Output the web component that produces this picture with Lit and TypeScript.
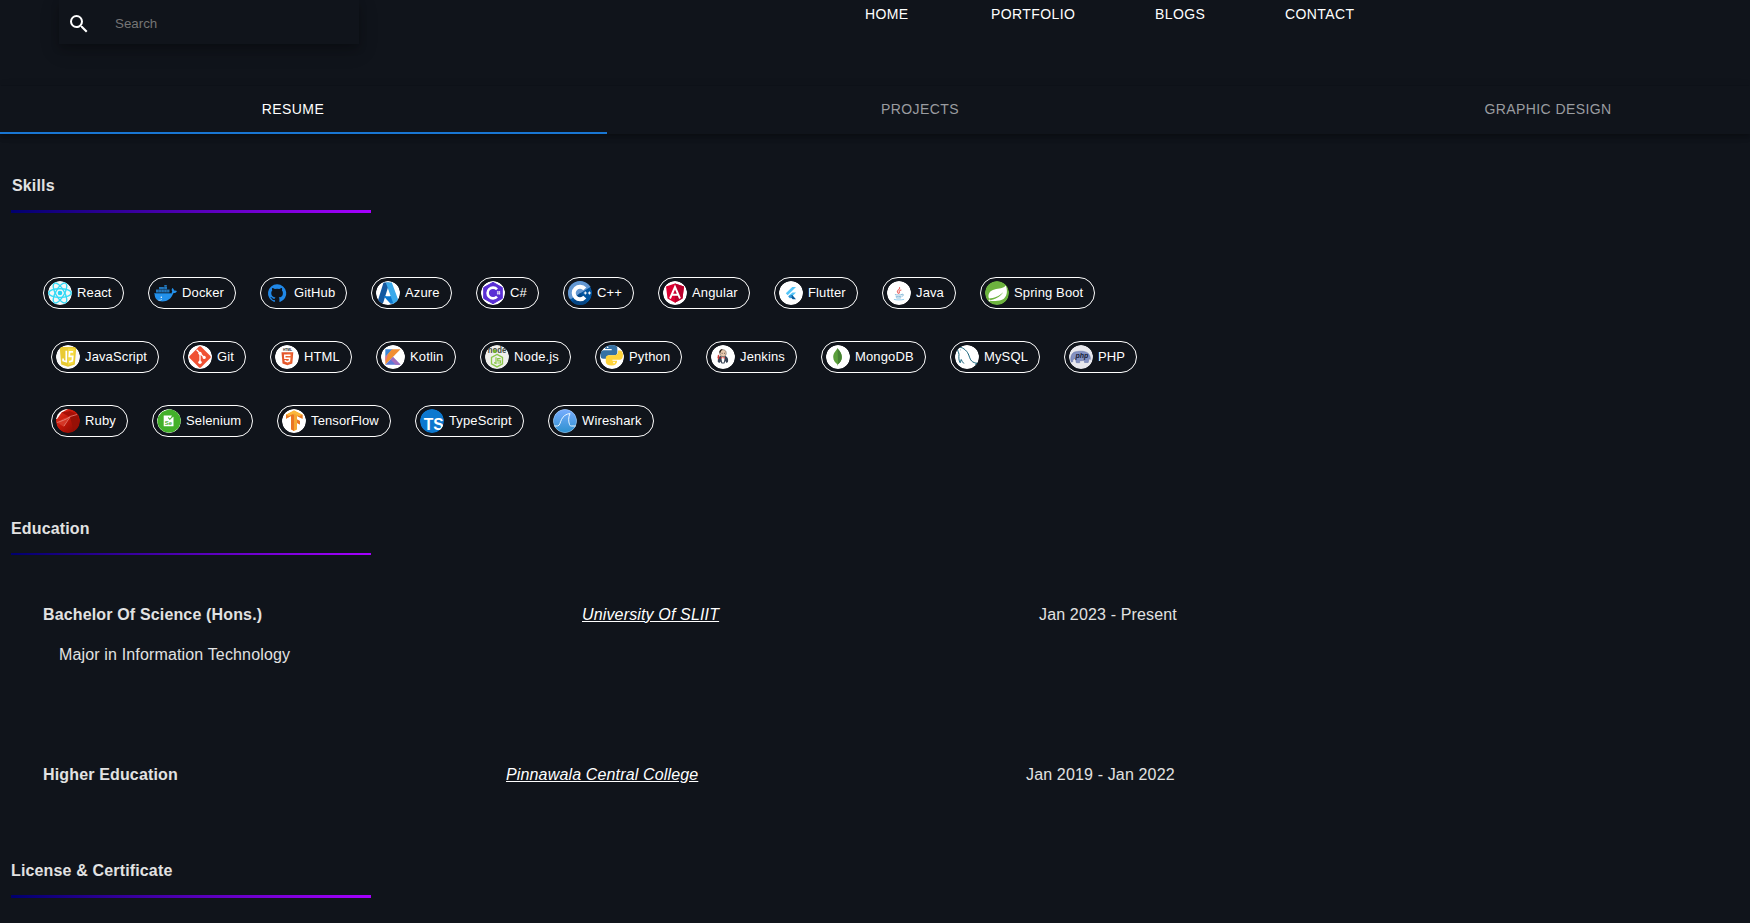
import { LitElement, html, svg, css, TemplateResult, SVGTemplateResult } from "lit";
import { customElement, property, state } from "lit/decorators.js";
import { classMap } from "lit/directives/class-map.js";
import { styleMap } from "lit/directives/style-map.js";

const white = svg`<circle cx="12" cy="12" r="12" fill="#fff"/>`;

const icons: Record<string, SVGTemplateResult> = {
  React: svg`<circle cx="12" cy="12" r="12" fill="#f4f6f6"/>
    <g fill="none" stroke="#35daf6" stroke-width="1.350">
      <ellipse cx="12" cy="12" rx="11.300" ry="4.300"/>
      <ellipse cx="12" cy="12" rx="11.300" ry="4.300" transform="rotate(60 12 12)"/>
      <ellipse cx="12" cy="12" rx="11.300" ry="4.300" transform="rotate(120 12 12)"/>
    </g><circle cx="12" cy="12" r="2.300" fill="#22d3f5"/>`,
  Docker: svg`
    <path fill="#2391ec" d="M1.500 12h16.200c1 0 1.500-.6 1.500-1.500-.8-1.300-.5-2.600.2-3.500 1 .7 1.600 1.500 1.600 2.600 1.200-.2 2.200 0 3 .5-.6 1.500-1.900 2.200-3.700 2.200C18.500 17.500 14.500 20.500 9.300 20.500 4.200 20.500 1.500 17.600 1.500 12z"/>
    <path fill="#2277bd" d="M3 8.500h13.500v3H3zM6 6h8v2.200H6zM11.300 4h2.500v1.800h-2.500z"/>
    <path stroke="#14385a" stroke-width=".4" d="M5.700 8.500v3M8.400 8.500v3M11.100 6v5.500M13.800 8.500v3M3 8.400h13.500"/>
    <path stroke="#1569ad" stroke-width=".9" d="M1.500 12.500h17.500"/>
    <path stroke="#d8efff" stroke-width=".7" fill="none" d="M5.500 19.200c1.500.2 2.600-.2 3.500-1"/><circle cx="8.300" cy="16.300" r=".7" fill="#fff"/>`,
  GitHub: svg`<g transform="translate(3 3) scale(.76)"><path fill="#2088e8" d="M12 .3a12 12 0 0 0-3.800 23.400c.6.100.8-.3.8-.6v-2c-3.300.7-4-1.600-4-1.600-.6-1.400-1.400-1.800-1.400-1.800-1-.7.100-.7.100-.7 1.200 0 1.900 1.200 1.900 1.200 1 1.800 2.800 1.300 3.500 1 0-.8.4-1.300.7-1.600-2.700-.3-5.500-1.300-5.500-6 0-1.200.5-2.300 1.300-3.100-.2-.4-.6-1.600 0-3.200 0 0 1-.3 3.400 1.200a11.500 11.500 0 0 1 6 0c2.300-1.500 3.300-1.200 3.300-1.200.6 1.600.2 2.800 0 3.200.9.8 1.300 1.900 1.300 3.200 0 4.600-2.800 5.600-5.500 5.900.5.400.9 1 .9 2.200v3.300c0 .3.1.7.8.6A12 12 0 0 0 12 .3z"/></g>`,
  Azure: svg`${white}
    <path fill="#1458a0" d="M7.500 1.500h6L7.300 21.500c-.2.600-.7 1-1.400 1H1z"/>
    <path fill="#0a77d0" d="M7.500 15h9l2 7.800h-4z"/>
    <path fill="#3aa9ea" d="M9.800 1.500h6l7.400 20c.2.600-.2 1.200-.8 1.200h-6.200c.6-.2.900-.7.700-1.300z"/>
    <path fill="#fff" d="M12.100 9.300l2.200 6h-4.200z"/>`,
  "C#": svg`${white}
    <path fill="#5a2fd4" stroke="#5a2fd4" stroke-linejoin="round" d="M12 1.300l9.300 5.300v10.800L12 22.700l-9.300-5.300V6.600z"/>
    <path fill="none" stroke="#fff" stroke-width="2.600" d="M16 8.400a5.400 5.400 0 1 0 0 7.200"/>
    <path stroke="#fff" stroke-width=".7" d="M16.800 10v3.600M18.400 10v3.600M15.900 11h3.400M15.900 12.700h3.400"/>`,
  "C++": svg`<circle cx="12" cy="12" r="12" fill="#00539e"/>
    <path fill="#6498d2" d="M0 0h24v5L3 18 0 17z"/><path fill="#064684" d="M12 12l9 12H2z"/>
    <path fill="none" stroke="#fff" stroke-width="4" d="M16.800 7.900a6.300 6.300 0 1 0 0 8.200"/>
    <path stroke="#fff" stroke-width="1" d="M15.800 12h3M17.300 10.500v3M19.900 12h3M21.400 10.500v3"/>`,
  Angular: svg`${white}
    <path fill="#dd0031" d="M12 2.600l9 3-1.500 12L12 21.800l-7.500-4.200L3 5.600z"/>
    <path fill="#b8002c" d="M12 2.600l9 3-1.500 12L12 21.800z"/>
    <path fill="none" stroke="#fff" stroke-width="1.900" d="M7 17.500L12 6l5 11.500M9 13.700h6"/>`,
  Flutter: svg`${white}
    <path fill="#54c5f8" d="M13.300 6h3.700L8.700 14.200l-1.900-1.900z"/>
    <path fill="#54c5f8" d="M13.500 11.500H17l-4 4-2-2z"/>
    <path fill="#075b9d" d="M11.100 15.500l1.900-1.800 4 4.600h-3.300z"/>
    <path fill="#2a98dc" d="M11.100 13.600l2 2-2 2-2-2z"/>`,
  Java: svg`${white}
    <g fill="none" stroke-linecap="round"><path stroke="#ee6b69" stroke-width="1.100" d="M12.600 6.500c1 2-3 2.700-2.300 4.400.3.700 1 1 1.300 1.600M14 9c-1.800.7-2.300 1.500-1.500 2.800"/>
    <path stroke="#6ba9d0" stroke-width=".8" d="M8.300 13.600c1.500.6 5 .6 6.500 0M9 15.300c1.500.5 4 .5 5.200 0M9.300 16.800c1.400.4 3.300.4 4.500 0M15.300 13.200c1.800-.3 1.500 1.500 0 2"/>
    <path stroke="#8ac8ea" stroke-width=".9" d="M7.300 18.500c2 .6 7.400.6 9.400 0"/></g>`,
  "Spring Boot": svg`<circle cx="12" cy="12" r="12" fill="#6db33f"/>
    <path fill="#fff" d="M20.800 4.500c2.700 7 .5 13.800-6 15.100-4.200.9-7.700.3-10.800-.1 5.500-.8 11.500-3.400 14.300-8.500-4 4.500-9.500 6-14.300 6.600-1.700-4.500 1-8.300 5.500-9.200 4.500-1 9-.8 11.300-3.900z"/>
    <circle cx="4.500" cy="19.500" r=".9" fill="#fff"/>`,
  JavaScript: svg`<circle cx="12" cy="12" r="12" fill="#fafafa"/>
    <path fill="#e9ca32" d="M3.700 2h16.600l-1.500 17.500L12 21.700l-6.800-2.200z"/><path fill="#f5dc44" d="M12 3.500h6.800l-1.300 15L12 20z"/>
    <path fill="none" stroke="#fff" stroke-width="1.700" d="M10.300 5.800v10.900l-3.200-1v-2.300M17.100 6.800h-3.500l-.3 4.500h3.400l-.4 4.600-3.200 1"/>`,
  Git: svg`${white}
    <rect x="4" y="4" width="16" height="16" rx="1.300" fill="#f05133" transform="rotate(45 12 12)"/>
    <path fill="none" stroke="#fff" stroke-width="1.300" d="M8.600 4.700l3.400 3.500v9.500M12 8.200l4 4"/>
    <g fill="#fff"><circle cx="12" cy="8.300" r="1.600"/><circle cx="12" cy="17.300" r="1.700"/><circle cx="16.200" cy="12.400" r="1.600"/></g>`,
  HTML: svg`${white}
    <path fill="#e4552b" d="M6.500 7.300h11.800l-1 11.300-4.900 1.700-4.900-1.700z"/><path fill="#f06a33" d="M12.400 8.300h4.700l-.8 9.400-3.900 1.300z"/>
    <path fill="none" stroke="#fff" stroke-width="1.500" d="M15.500 10.300H9.700l.2 2.900h4.800l-.3 2.800-2 .7-2.100-.7-.1-.9"/>
    <text x="12.400" y="6.200" font-size="3.300" font-weight="700" text-anchor="middle" textLength="9" lengthAdjust="spacingAndGlyphs" fill="#222">HTML</text>`,
  Kotlin: svg`${white}
    <path fill="#3d88d8" d="M4.300 4.300h7.500l-7.500 8z"/><path fill="#f18e33" d="M11 4.300h8.500L4.300 19.800V12z"/>
    <path fill="#5c79d6" d="M4.300 19.800L12 12l7.600 7.800z"/><path fill="#a36cbf" d="M12 12l7.600 7.800h-5L9.500 14.500z"/><path fill="#d871a0" d="M4.300 12l3-3-3 8z"/>`,
  "Node.js": svg`<circle cx="12" cy="12" r="12" fill="#efefec"/>
    <text x="12" y="8.300" font-size="8.300" font-weight="700" text-anchor="middle" textLength="18.500" lengthAdjust="spacingAndGlyphs" fill="#3f493d">node</text>
    <circle cx="9.800" cy="6.200" r="1.700" fill="#78b72b"/>
    <path fill="none" stroke="#8cc84b" stroke-width="1.300" d="M12 9.400l5.500 3.100v6.300L12 21.900l-5.500-3.100v-6.300z"/>
    <path fill="none" stroke="#8cc84b" stroke-width="1.200" d="M11 12.300v6l-2-.7M15.500 13.700h-2.800v2.100h2.800V18h-3"/>`,
  Python: svg`${white}
    <g transform="translate(.4 -1.200) scale(.94)">
    <path fill="#3571a4" d="M5 5.500C5 2 7.300.5 11.500.5S18 2 18 5v4.200c0 2-1.300 3.100-3.300 3.100H9.500c-2 0-3.300 1.300-3.300 3.700H3C1 16 0 14.500 0 11.500S1.200 6.800 3.800 6.800H12V5.500z"/>
    <path fill="#ffd43b" d="M18.800 7h2c2 0 3.200 1.800 3.200 5s-1.300 5-3.500 5h-7.700v1h5c0 3.500-2 5-5.800 5-4.200 0-6.300-1.500-6.300-4v-3.800c0-2 1.400-3 3.400-3h5.500c2.200 0 4.200-1.300 4.200-3.700z"/>
    <circle cx="7.700" cy="3.700" r=".9" fill="#fff"/><circle cx="14.500" cy="20" r=".9" fill="#fff"/></g>`,
  Jenkins: svg`${white}
    <path fill="#374355" d="M6.800 17c-.3-3 .7-5.700 2.700-6h5c2.300.7 3 3.500 2.500 6l-1.600 1-1-2-1 2.500h-2.800l-1.300-2-.8 1.500z"/><path fill="#fff" d="M10 11.500h4l-1.200 6h-1.600z"/>
    <path fill="#e9c9ae" stroke="#4b403b" stroke-width=".5" d="M8.700 6.500C9.700 4.300 14 4 15 6.700c.8 3-.7 4.900-2.900 4.900S8.200 9.500 8.700 6.500z"/>
    <path fill="#33291f" d="M8.300 7c.3-2.500 2-3.300 3.500-3l-1.500 1.800L9 8.500z"/><path fill="#d33833" d="M9.800 11.700l2 1 2-1v2l-2-.7-2 .7zM7 9.500l1.500 1.200-.6 4L6.400 13z"/>
    <path stroke="#222" stroke-width=".8" d="M10.700 8.300h.8M13 8.300h.8"/>`,
  MongoDB: svg`${white}
    <path fill="#5b9f3b" d="M11.500 3c.5 1.800 4.300 4 4.300 9 0 4-2.500 6-3.700 7.200L11.800 21l-.5-1.800C9.500 18 7.200 15.500 7.200 12c0-4.500 3.500-6.500 4.300-9z"/>
    <path fill="#458132" d="M11.500 3c.5 1.800 4.300 4 4.300 9 0 4-2.500 6-3.700 7.200z"/>`,
  MySQL: svg`${white}
    <path fill="none" stroke="#17647c" stroke-width="1" d="M2.600 3c2.300-2.200 7.500.7 10 4.700 2 3.200 1.800 6 4 8.300 1.500 1.500 3.600 2 5.700 2.300l-1.800.8 1.800 1.800M2.600 3C2 5.800 4 7 4 9.500c-.3 3-.3 6 1.200 8.300.4-1 .5-2.200 1-3.300.7 1.500 1.500 3 2.700 4"/>
    <path fill="#17647c" d="M4.800 4.300c1 .2 1.200.8 1.200 1.500z"/>`,
  PHP: svg`<circle cx="12" cy="12" r="12" fill="#e8e8ed"/>
    <path fill="#8391c2" stroke="#6370a4" stroke-width=".5" d="M2.200 17c-1.200-4 .2-9 3.500-10 3.500-1 9.800-1.500 13 1 2 1.500 3 4 2.600 6.500l-1.300-1-.8 4h-3.700l-.3-2.200c-1.600.5-3 .5-4.500.2v2.200H7.300l-.8-4c-2.300 0-3 1.300-2.700 3z"/>
    <text x="12.800" y="12.500" font-size="7" font-weight="700" font-style="italic" text-anchor="middle" fill="#181d36">php</text>`,
  Ruby: svg`<defs><linearGradient id="rb" x1="0" y1="0" x2="1" y2="1"><stop stop-color="#e33a26"/><stop offset=".45" stop-color="#c41508"/><stop offset="1" stop-color="#780a04"/></linearGradient></defs>
    <circle cx="12" cy="12" r="12" fill="url(#rb)"/>
    <path fill="#fff" d="M0 0h12L5.500 3.500 1 10H0z"/><path fill="#a60f06" d="M5.500 3.500L14 2l7 3.500-7 2.500z"/>
    <path fill="#971006" d="M14 8l7.500-2 1.500 10-5 6z"/><path fill="#dc4433" d="M2 14c3-4 7-6 12-6-3 3-5 6-6 10z" opacity=".7"/>
    <path fill="none" stroke="#f0a197" stroke-width=".8" d="M1 13.500C5 12 10 11 14 7.500M14 7.500l7-2M8 17l6-9" opacity=".8"/>`,
  Selenium: svg`${white}
    <path fill="#43b02a" d="M12 .3l4 .5 4 2.500 3.500 5 .3 5-2 5.500-5 4-5 .9-5.500-1.200-4.500-4.500-1.500-5 .7-5 4-5z"/>
    <path fill="#fff" d="M6.700 6.500h8.300l-1 1.200h2.500v9.600H6.700z"/><path fill="none" stroke="#43b02a" stroke-width="1.100" d="M11.200 8.500l1.600 1.800 4.600-4.500"/>
    <text x="11.500" y="15.900" font-size="6" font-weight="700" text-anchor="middle" fill="#43b02a">Se</text>`,
  TensorFlow: svg`${white}
    <path fill="#f5a735" d="M12 1.500l8.500 4.300v4L15 7v3.500l3 1.600v3.500l-3-1.600v6.500L12 22l-3-1.700V7L4 9.800v-4z"/>
    <path fill="#ea7624" d="M4 5.800l5-1.500L12 6v16l-3-1.700V7L4 9.800zM15 10.500l3 1.600v3.500l-3-1.600zM20.500 5.800v4L15 7z"/><path fill="#fbb83c" d="M12 1.500l8.500 4.300-3 1.300L12 4.500 7 7 4 5.800z"/>`,
  TypeScript: svg`<circle cx="12" cy="12" r="12" fill="#0c78cf"/>
    <text x="13.800" y="20.500" font-size="17" font-weight="700" text-anchor="middle" textLength="20" lengthAdjust="spacingAndGlyphs" fill="#fff">TS</text>`,
  Wireshark: svg`<defs><linearGradient id="ws" x2="0" y2="1"><stop stop-color="#79adff"/><stop offset="1" stop-color="#2d91cf"/></linearGradient></defs>
    <circle cx="12" cy="12" r="11.700" fill="url(#ws)" stroke="#b7dafa" stroke-width=".6"/>
    <path fill="none" stroke="#e9f6ff" stroke-width="1" d="M1 17h3.500C7 16.700 7 13.500 8.500 10.500c1.600-3.300 4.500-5.600 8.500-6-1.700 3.800-1.700 7.700-.5 11 .3 1.200 1 1.500 2 1.500H23"/>`,
};

interface Skill { name: string; width: number; }

const skillRows: Skill[][] = [
  [["React", 81], ["Docker", 88], ["GitHub", 87], ["Azure", 81], ["C#", 63], ["C++", 71], ["Angular", 92], ["Flutter", 84], ["Java", 74], ["Spring Boot", 115]],
  [["JavaScript", 108], ["Git", 63], ["HTML", 82], ["Kotlin", 80], ["Node.js", 91], ["Python", 87], ["Jenkins", 91], ["MongoDB", 105], ["MySQL", 90], ["PHP", 73]],
  [["Ruby", 77], ["Selenium", 101], ["TensorFlow", 114], ["TypeScript", 109], ["Wireshark", 106]],
].map((row) => row.map(([name, width]) => ({ name, width }) as Skill));

@customElement("skill-chip")
export class SkillChip extends LitElement {
  @property() name = "";

  static styles = css`
    :host { display: block; flex: none; }
    .chip {
      box-sizing: border-box; height: 32px; display: flex; align-items: center;
      border: 1px solid #fff; border-radius: 16px; padding-left: 4px; gap: 5px;
      font-size: 13px; line-height: 19.5px; letter-spacing: .13px; color: #fff; white-space: nowrap;
    }
    .avatar { width: 24px; height: 24px; flex: none; display: block; border-radius: 50%; overflow: hidden; letter-spacing: 0; }
  `;

  render(): TemplateResult {
    return html`<div class="chip">
      <svg class="avatar" viewBox="0 0 24 24">${icons[this.name]}</svg>
      <span>${this.name}</span>
    </div>`;
  }
}

@customElement("app-root")
export class AppRoot extends LitElement {
  @state() private tab = 0;

  static styles = css`
    :host {
      display: block; height: 923px; overflow: hidden; background: #10141b; color: #e2e2e2;
      font-family: "Liberation Sans", Arial, sans-serif; font-size: 16px; line-height: 24px; letter-spacing: .15px;
    }
    .header { display: flex; height: 86px; align-items: flex-start; }
    .search {
      box-sizing: border-box; width: 300px; height: 44px; margin-left: 59px; padding: 3px 8px 0;
      display: flex; align-items: center; gap: 21px;
      box-shadow: 0 4px 8px 0 rgba(0,0,0,.2), 0 6px 20px 0 rgba(0,0,0,.19);
    }
    .glass { width: 24px; height: 24px; fill: #fff; display: block; flex: none; }
    .field {
      flex: 1; min-width: 0; border: 0; outline: 0; padding: 0 0 1px 3px; background: none; color: #fff;
      font: 13.333px "Liberation Sans", Arial, sans-serif;
    }
    .field::placeholder { color: #757575; }
    .nav {
      display: grid; grid-template-columns: 126px 164px 130px auto; margin-left: 506px; padding-top: 2px;
      font-size: 14px; letter-spacing: .4px; color: #fff;
    }
    .tabs {
      display: grid; grid-template-columns: 607px 626px 517px; height: 48px;
      box-shadow: 0 2px 4px -1px rgba(0,0,0,.2), 0 4px 5px 0 rgba(0,0,0,.14), 0 1px 10px 0 rgba(0,0,0,.08);
      background: #10141b; font-size: 14px; letter-spacing: .4px;
    }
    .tab {
      box-sizing: border-box; display: flex; align-items: center; justify-content: center;
      border-bottom: 2px solid transparent; color: #9a9ca0; white-space: nowrap; cursor: pointer;
    }
    .tab:first-child { padding-right: 21px; }
    .tab:last-child { padding-left: 113px; }
    .active { color: #fff; border-color: #1976d2; }
    .section { box-sizing: border-box; padding-left: 11px; }
    .skills { height: 342px; padding-top: 40px; }
    .skills .title { padding-left: 1px; }
    .education { height: 342px; padding-top: 41px; }
    .license { padding-top: 41px; }
    .title { margin: 0; font-size: 16px; font-weight: 700; line-height: 24px; }
    .rule { width: 360px; height: 3px; margin-top: 12px; background: linear-gradient(90deg, #00006e, #a600ff); }
    .thin { height: 2px; }
    .chips { display: flex; flex-direction: column; gap: 32px; padding: 64px 0 0 40px; }
    .row { display: flex; gap: 24px; }
    .row:first-child { margin-left: -8px; }
    .entry { display: grid; margin-left: 32px; }
    .first { grid-template-columns: 539px 457px auto; margin-top: 48px; }
    .second { grid-template-columns: 463px 520px auto; margin-top: 96px; }
    .degree { font-weight: 700; }
    .school { font-style: italic; color: #fff; }
    .name { text-decoration: underline; }
    .major { margin: 16px 0 0 48px; }
  `;

  render(): TemplateResult {
    return html`
      <header class="header">
        <div class="search">
          <svg class="glass" viewBox="0 0 24 24"><path d="M15.500 14h-.79l-.28-.27A6.471 6.471 0 0 0 16 9.500 6.500 6.500 0 1 0 9.500 16c1.610 0 3.090-.59 4.230-1.570l.27.28v.79l5 4.990L20.490 19l-4.990-5zm-6 0C7.010 14 5 11.990 5 9.500S7.010 5 9.500 5 14 7.010 14 9.500 11.990 14 9.500 14z"/></svg>
          <input class="field" placeholder="Search" />
        </div>
        <nav class="nav">${["HOME", "PORTFOLIO", "BLOGS", "CONTACT"].map((t) => html`<span>${t}</span>`)}</nav>
      </header>
      <div class="tabs">
        ${["RESUME", "PROJECTS", "GRAPHIC DESIGN"].map((t, i) => html`<div
          class=${classMap({ tab: true, active: this.tab === i })} @click=${() => (this.tab = i)}>${t}</div>`)}
      </div>
      <section class="section skills">
        <h2 class="title">Skills</h2>
        <div class="rule"></div>
        <div class="chips">
          ${skillRows.map((row) => html`<div class="row">
            ${row.map((s) => html`<skill-chip name=${s.name} style=${styleMap({ width: `${s.width}px` })}></skill-chip>`)}
          </div>`)}
        </div>
      </section>
      <section class="section education">
        <h2 class="title">Education</h2>
        <div class="rule thin"></div>
        <div class="entry first">
          <span class="degree">Bachelor Of Science (Hons.)</span>
          <span class="school"><span class="name">University Of SLIIT</span></span>
          <span>Jan 2023 - Present</span>
        </div>
        <div class="major">Major in Information Technology</div>
        <div class="entry second">
          <span class="degree">Higher Education</span>
          <span class="school"><span class="name">Pinnawala Central College</span></span>
          <span>Jan 2019 - Jan 2022</span>
        </div>
      </section>
      <section class="section license">
        <h2 class="title">License &amp; Certificate</h2>
        <div class="rule"></div>
      </section>
    `;
  }
}
